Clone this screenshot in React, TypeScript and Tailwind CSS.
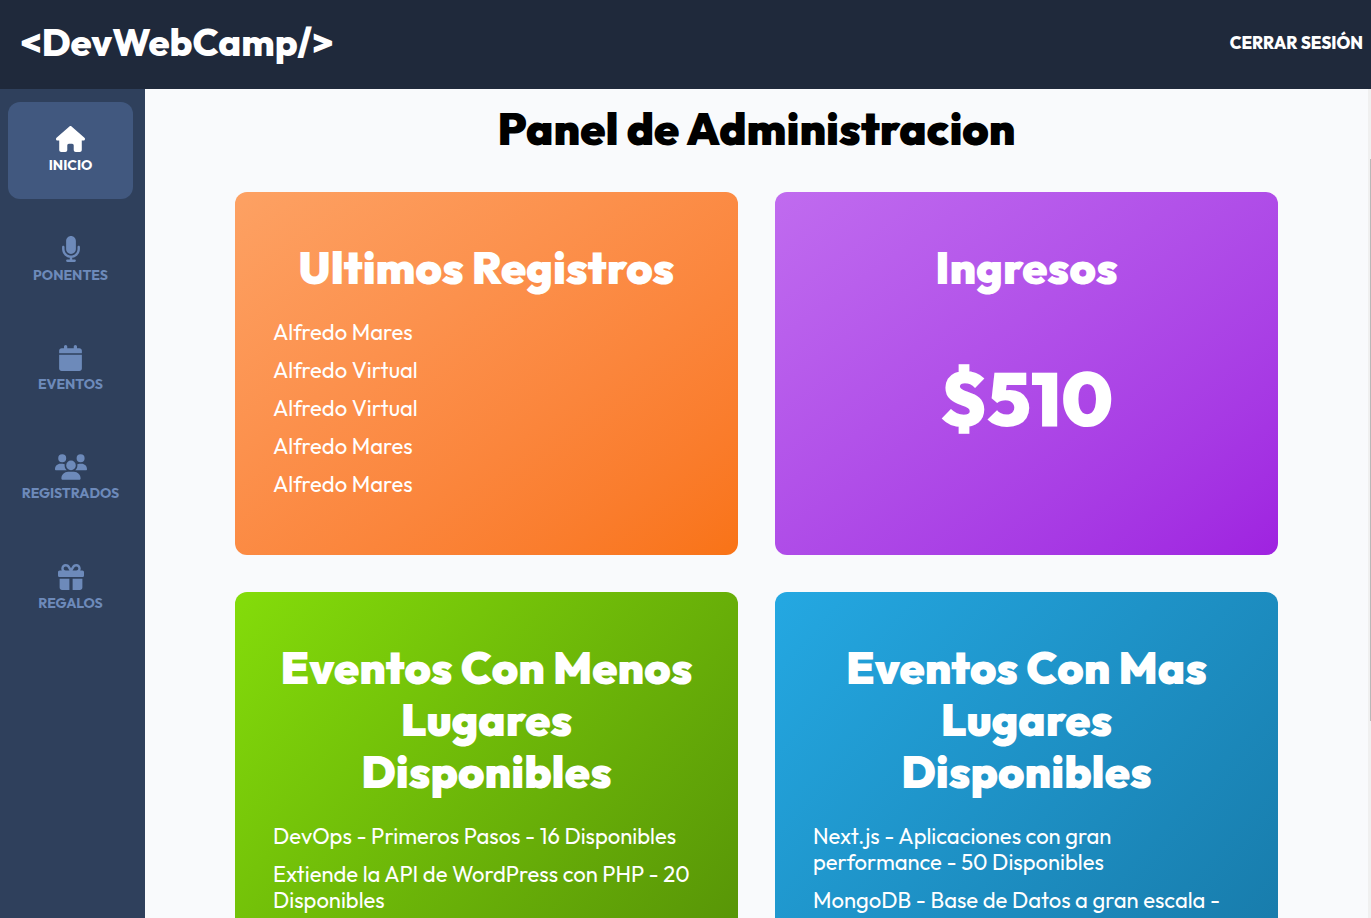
import type { ComponentType, ReactNode } from "react";
import { FaHouse, FaMicrophone, FaCalendar, FaUsers, FaGift } from "react-icons/fa6";

const navItems: { label: string; icon: ComponentType<{ className?: string }>; iconWidth: string; active?: boolean }[] = [
  { label: "Inicio", icon: FaHouse, iconWidth: "w-[29px]", active: true },
  { label: "Ponentes", icon: FaMicrophone, iconWidth: "w-[20px]" },
  { label: "Eventos", icon: FaCalendar, iconWidth: "w-[23px]" },
  { label: "Registrados", icon: FaUsers, iconWidth: "w-[32px]" },
  { label: "Regalos", icon: FaGift, iconWidth: "w-[26px]" },
];

const registros = ["Alfredo Mares", "Alfredo Virtual", "Alfredo Virtual", "Alfredo Mares", "Alfredo Mares"];
const menosLugares = ["DevOps - Primeros Pasos - 16 Disponibles", "Extiende la API de WordPress con PHP - 20 Disponibles"];
const masLugares = ["Next.js - Aplicaciones con gran performance - 50 Disponibles", "MongoDB - Base de Datos a gran escala -"];

function Card({ title, className, children }: { title: string; className: string; children: ReactNode }) {
  return (
    <section className={`rounded-xl bg-linear-to-br p-[38px] text-white ${className}`}>
      <h3 className="mt-3 mb-[25px] text-center text-[45px] leading-[52px] font-black">{title}</h3>
      {children}
    </section>
  );
}

function List({ items }: { items: string[] }) {
  return (
    <ul className="flex flex-col gap-3 text-[22px] leading-[26px]">
      {items.map((item, i) => (
        <li key={i}>{item}</li>
      ))}
    </ul>
  );
}

export default function App() {
  return (
    <div className="flex h-screen flex-col overflow-hidden bg-[#f9fafc] font-[Outfit,Lato,sans-serif]">
      <header className="flex shrink-0 items-center justify-between bg-[#1f293b] pt-4 pr-2 pb-5 pl-5 text-white">
        <a href="#inicio">
          <h2 className="text-[38px] leading-[53px] font-extrabold">&lt;DevWebCamp/&gt;</h2>
        </a>
        <button type="button" className="text-[17px] leading-6 font-extrabold uppercase">
          Cerrar Sesión
        </button>
      </header>
      <div className="flex min-h-0 flex-1">
        <aside className="w-[145px] shrink-0 bg-[#2f405c] pt-[13px] pr-3 pl-2">
          <nav className="grid min-h-[535px] grid-rows-5 gap-3">
            {navItems.map(({ label, icon: Icon, iconWidth, active }) => (
              <a
                key={label}
                href={`#${label.toLowerCase()}`}
                className={`flex flex-col items-center justify-center gap-[3px] rounded-xl text-sm leading-5 font-bold uppercase ${
                  active ? "bg-[#41587f] text-white" : "text-[#6d8aba]"
                }`}
              >
                <Icon className={`h-[26px] ${iconWidth}`} />
                {label}
              </a>
            ))}
          </nav>
        </aside>
        <main className="min-w-0 flex-1 overflow-hidden px-[90px] pt-3">
          <h1 className="mb-[35px] text-center text-[45px] leading-[56px] font-black text-black">Panel de Administracion</h1>
          <div className="grid grid-cols-2 gap-[37px]">
            <Card title="Ultimos Registros" className="min-h-[363px] from-[#fda163] to-[#f97316]">
              <List items={registros} />
            </Card>
            <Card title="Ingresos" className="min-h-[363px] from-[#c06bef] to-[#9f22e0]">
              <p className="pt-[29px] text-center text-[76px] leading-[100px] font-black">$510</p>
            </Card>
            <Card title="Eventos Con Menos Lugares Disponibles" className="min-h-[570px] from-[#84dc0a] to-[#4d8406]">
              <List items={menosLugares} />
            </Card>
            <Card title="Eventos Con Mas Lugares Disponibles" className="min-h-[570px] from-[#24a8e2] to-[#15719e]">
              <List items={masLugares} />
            </Card>
          </div>
        </main>
        <div className="flex w-[3px] shrink-0 justify-end bg-[#f0f0f0] pt-[70px]">
          <div className="h-full max-h-[562px] w-px bg-[#b8b8b8]" />
        </div>
      </div>
    </div>
  );
}
